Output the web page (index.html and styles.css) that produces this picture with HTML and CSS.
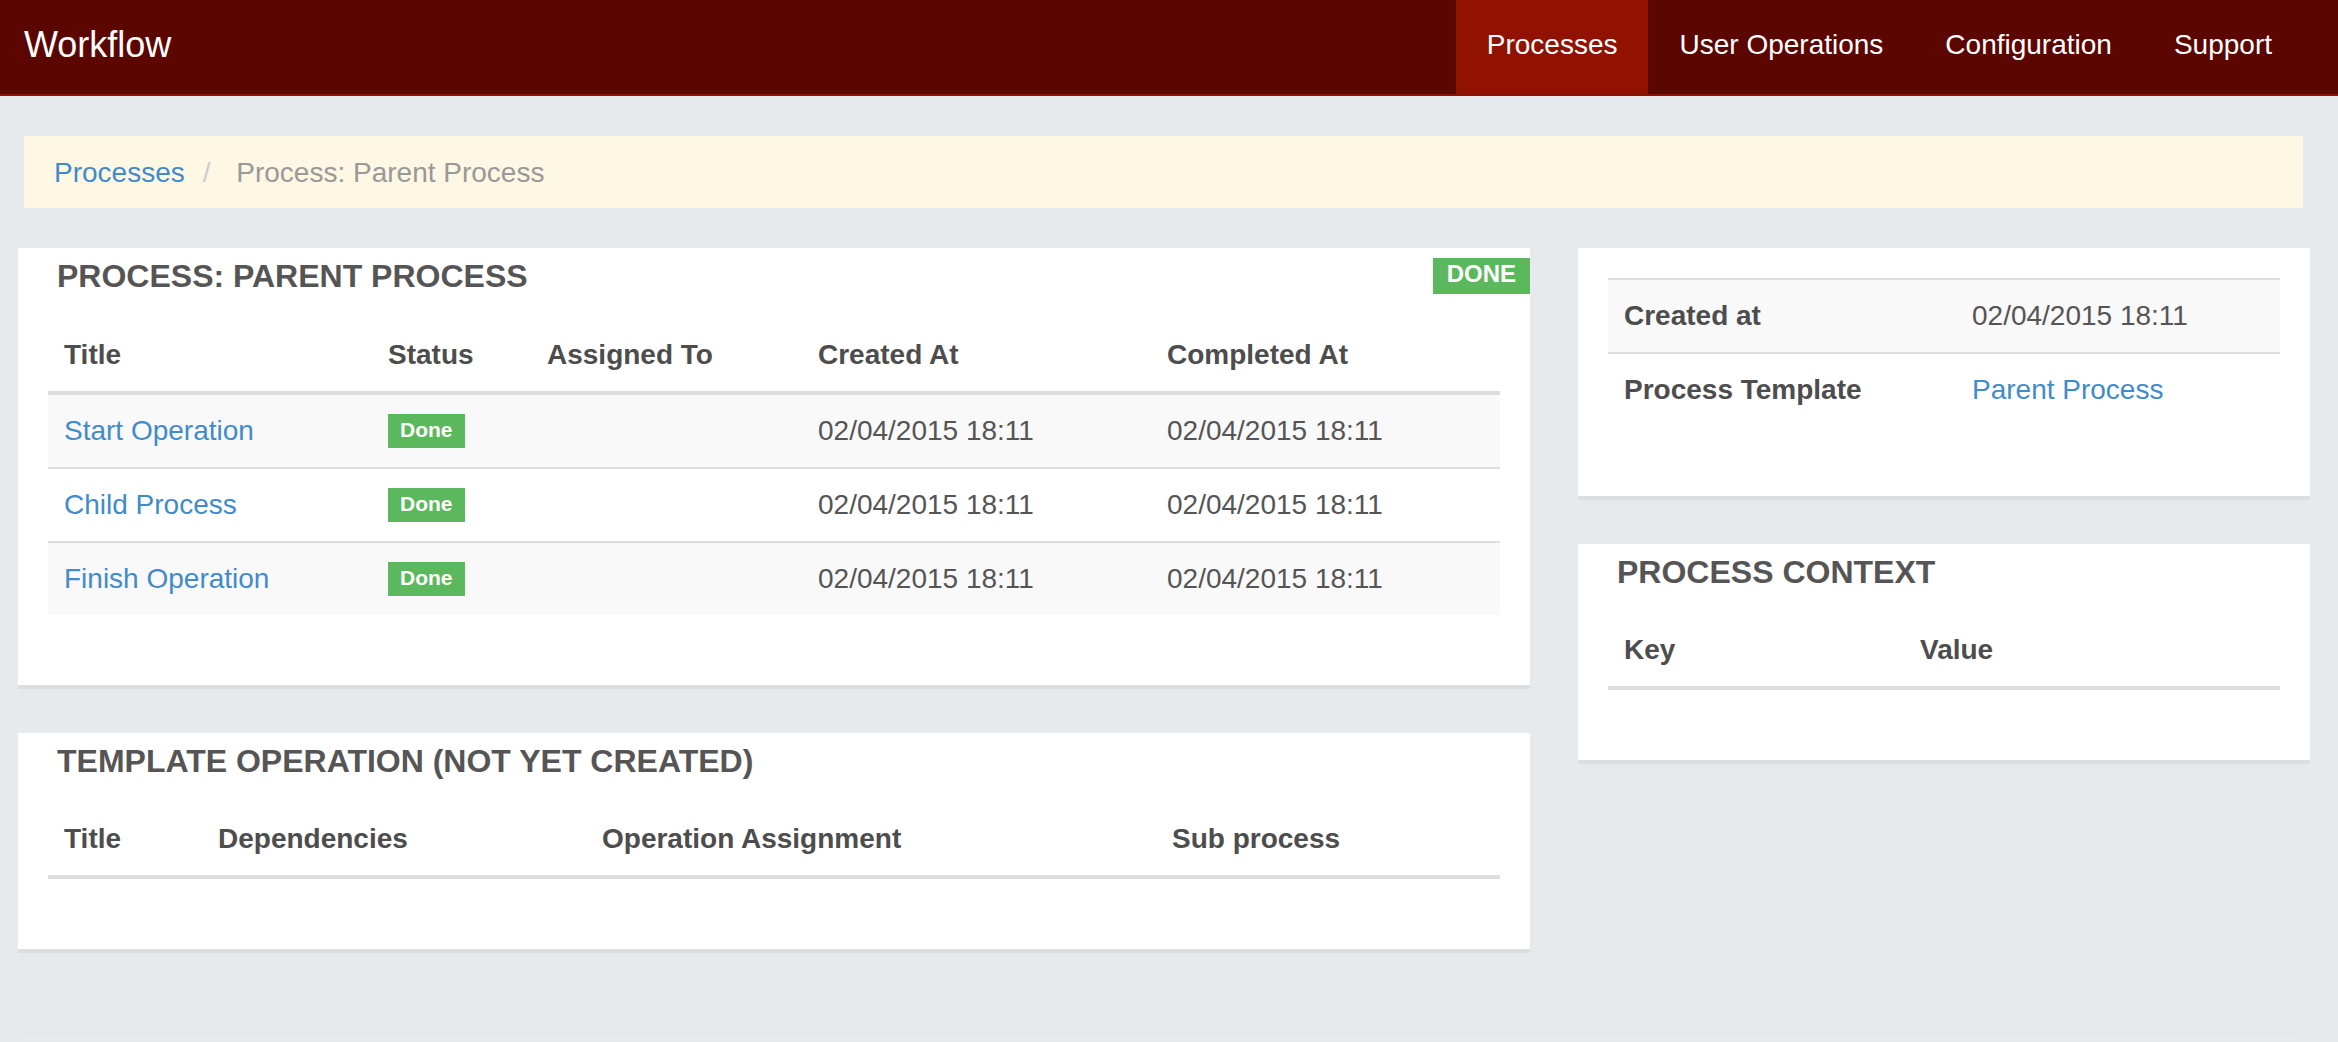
FILE: index.html
```html
<!DOCTYPE html>
<html>
<head>
<meta charset="utf-8">
<title>Workflow</title>
<link rel="stylesheet" href="styles.css">
</head>
<body>
<nav class="navbar">
  <a class="brand" href="#">Workflow</a>
  <ul class="nav">
    <li><a class="active" href="#">Processes</a></li>
    <li><a href="#">User Operations</a></li>
    <li><a href="#">Configuration</a></li>
    <li><a href="#">Support</a></li>
  </ul>
</nav>

<div class="page">
  <ol class="breadcrumb">
    <li><a href="#">Processes</a></li>
    <li class="current">Process: Parent Process</li>
  </ol>

  <div class="row">
    <div class="col col-main">
      <section class="panel">
        <div class="panel-head">
          <h3 class="panel-title">PROCESS: PARENT PROCESS</h3>
          <span class="badge">DONE</span>
        </div>
        <table class="table striped">
          <colgroup>
            <col class="w-324"><col class="w-159"><col class="w-271"><col class="w-349"><col class="w-349">
          </colgroup>
          <thead>
            <tr><th>Title</th><th>Status</th><th>Assigned To</th><th>Created At</th><th>Completed At</th></tr>
          </thead>
          <tbody>
            <tr><td><a href="#">Start Operation</a></td><td><span class="label">Done</span></td><td></td><td>02/04/2015 18:11</td><td>02/04/2015 18:11</td></tr>
            <tr><td><a href="#">Child Process</a></td><td><span class="label">Done</span></td><td></td><td>02/04/2015 18:11</td><td>02/04/2015 18:11</td></tr>
            <tr><td><a href="#">Finish Operation</a></td><td><span class="label">Done</span></td><td></td><td>02/04/2015 18:11</td><td>02/04/2015 18:11</td></tr>
          </tbody>
        </table>
      </section>

      <section class="panel">
        <div class="panel-head">
          <h3 class="panel-title">TEMPLATE OPERATION (NOT YET CREATED)</h3>
        </div>
        <table class="table">
          <colgroup>
            <col class="w-154"><col class="w-384"><col class="w-570"><col class="w-344">
          </colgroup>
          <thead>
            <tr><th>Title</th><th>Dependencies</th><th>Operation Assignment</th><th>Sub process</th></tr>
          </thead>
          <tbody></tbody>
        </table>
      </section>
    </div>

    <div class="col col-side">
      <section class="panel panel-plain">
        <table class="table striped">
          <colgroup>
            <col class="w-348"><col class="w-324">
          </colgroup>
          <tbody>
            <tr><th>Created at</th><td>02/04/2015 18:11</td></tr>
            <tr><th>Process Template</th><td><a href="#">Parent Process</a></td></tr>
          </tbody>
        </table>
      </section>

      <section class="panel">
        <div class="panel-head">
          <h3 class="panel-title">PROCESS CONTEXT</h3>
        </div>
        <table class="table">
          <colgroup>
            <col class="w-296"><col class="w-376">
          </colgroup>
          <thead>
            <tr><th>Key</th><th>Value</th></tr>
          </thead>
          <tbody></tbody>
        </table>
      </section>
    </div>
  </div>

  <hr class="footer-rule">
</div>
</body>
</html>
```

FILE: styles.css
```css
* { box-sizing: border-box; }

html, body {
  margin: 0;
  padding: 0;
}

body {
  background: #e6eaed;
  font-family: "Liberation Sans", Arial, "Helvetica Neue", Helvetica, sans-serif;
  font-size: 28px;
  line-height: 40px;
  color: #555;
  overflow: hidden;
}

a {
  color: #428bca;
  text-decoration: none;
}

/* Navbar */
.navbar {
  display: flex;
  align-items: flex-start;
  background: #5c0600;
  border-bottom: 2px solid #8f1200;
  padding: 0 35px 0 24px;
  height: 96px;
}

.brand {
  color: #fff;
  font-size: 36px;
  line-height: 40px;
  padding: 25px 0 29px;
}

.nav {
  list-style: none;
  margin: 0 0 0 auto;
  padding: 0;
  display: flex;
}

.nav a {
  display: block;
  color: #fff;
  font-size: 28px;
  line-height: 40px;
  padding: 25px 31px 29px;
}

.nav a.active {
  background: #911200;
}

/* Page */
.page {
  padding: 40px 28px 0 18px;
}

.breadcrumb {
  list-style: none;
  margin: 0 7px 40px 6px;
  padding: 17px 30px 15px;
  background: #fdf7e3;
  display: flex;
}

.breadcrumb li + li::before {
  content: "/\00a0";
  color: #ccc;
  padding: 0 18px;
}

.breadcrumb .current {
  color: #999;
}

.row {
  display: flex;
  gap: 48px;
  align-items: flex-start;
}

.col {
  display: flex;
  flex-direction: column;
  gap: 44px;
}

.col-main { width: 1512px; }
.col-side { width: 732px; }

/* Panels */
.panel {
  background: #fff;
  border-bottom: 4px solid #dadee1;
  padding: 10px 30px 30px;
}

.panel-plain {
  padding-top: 30px;
}

.panel-head {
  display: flex;
  align-items: flex-start;
  margin-bottom: 25px;
}

.panel-title {
  flex: 1;
  margin: 0;
  padding: 1px 0 0 9px;
  font-size: 32px;
  line-height: 34px;
  font-weight: bold;
  color: #555;
}

.badge {
  margin-right: -30px;
  background: #5cb85c;
  color: #fff;
  font-weight: bold;
  font-size: 24px;
  line-height: 24px;
  padding: 4px 14px 8px;
}

.label {
  display: inline-block;
  vertical-align: middle;
  background: #5cb85c;
  color: #fff;
  font-weight: bold;
  font-size: 21px;
  line-height: 21px;
  padding: 5px 12px 8px;
  margin-top: -3px;
}

/* Tables */
.table {
  width: 100%;
  table-layout: fixed;
  border-collapse: separate;
  border-spacing: 0;
  margin-bottom: 40px;
}

.table th,
.table td {
  text-align: left;
  padding: 16px;
  line-height: 40px;
  vertical-align: top;
}

.table th {
  font-weight: bold;
  color: #4d4d4d;
}

.table thead th {
  border-bottom: 4px solid #dddddd;
}

.table tbody th,
.table tbody td {
  border-top: 2px solid #dddddd;
}

.table thead + tbody tr:first-child th,
.table thead + tbody tr:first-child td {
  border-top: 0;
}

.table.striped tbody tr:nth-child(odd) th,
.table.striped tbody tr:nth-child(odd) td {
  background: #f9f9f9;
}

.w-324 { width: 324px; }
.w-159 { width: 159px; }
.w-271 { width: 271px; }
.w-349 { width: 349px; }
.w-154 { width: 154px; }
.w-384 { width: 384px; }
.w-570 { width: 570px; }
.w-344 { width: 344px; }
.w-348 { width: 348px; }
.w-296 { width: 296px; }
.w-376 { width: 376px; }

.footer-rule {
  margin: 84px 7px 0 6px;
  border: 0;
  border-top: 2px solid #ece9e7;
  height: 0;
}
```
